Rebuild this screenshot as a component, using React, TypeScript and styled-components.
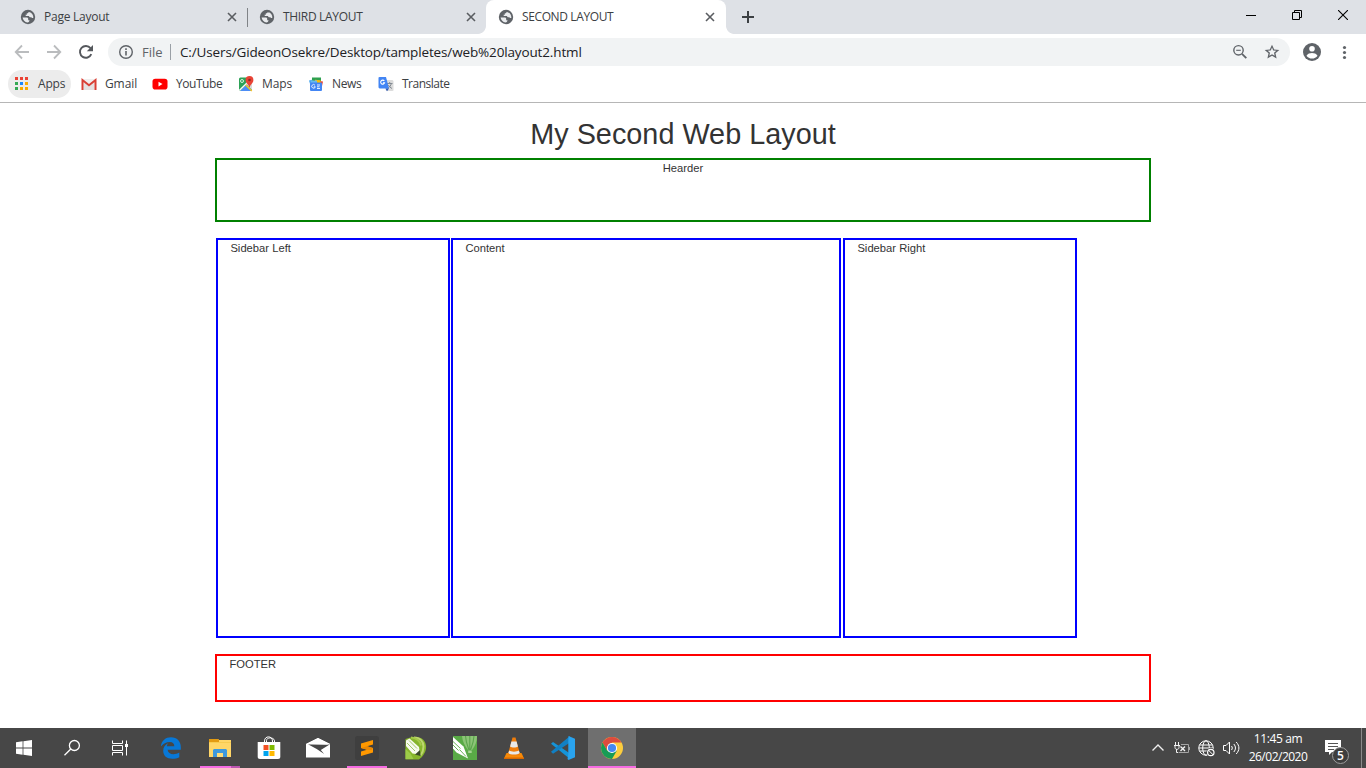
import React from 'react';
import styled, { createGlobalStyle } from 'styled-components';

const Global = createGlobalStyle`
  * { box-sizing: border-box; }
  html, body { margin: 0; padding: 0; background: #fff; overflow: hidden; }
  svg { display: block; flex: none; }
`;

const ui = `"Open Sans", "Noto Sans", sans-serif`;

const Screen = styled.div`
  width: 1366px;
  height: 768px;
  display: flex;
  flex-direction: column;
  font-family: ${ui};
`;

const Text = styled.span<{ $size?: number; $ls?: number; $color?: string }>`
  font-size: ${p => p.$size ?? 12}px;
  letter-spacing: ${p => p.$ls ?? 0}px;
  color: ${p => p.$color ?? '#3c4043'};
  white-space: nowrap;
  line-height: 16px;
`;

/* ---------- Tab strip ---------- */
const TabStrip = styled.div`
  height: 34px;
  background: #dee1e6;
  display: flex;
  padding-left: 8px;
`;

const Tab = styled.div<{ $active?: boolean; $divider?: boolean }>`
  position: relative;
  width: ${p => (p.$active ? 240 : 239)}px;
  height: 34px;
  display: flex;
  align-items: center;
  padding: 0 ${p => (p.$active ? 11 : 10)}px 0 12px;
  background: ${p => (p.$active ? '#fff' : 'transparent')};
  border-radius: 8px 8px 0 0;
  ${p => p.$divider && `&::after {
    content: ''; position: absolute; right: -1px; top: 8px; width: 1px; height: 19px; background: #808387;
  }`}
  ${p => p.$active && `
    &::before, &::after { content: ''; position: absolute; bottom: 0; width: 8px; height: 8px; }
    &::before { left: -8px; background: radial-gradient(circle at 0 0, transparent 7.5px, #fff 8.2px); }
    &::after { right: -8px; background: radial-gradient(circle at 100% 0, transparent 7.5px, #fff 8.2px); }
  `}
`;

const TabTitle = styled(Text)`
  margin-left: 8px;
  flex: 1;
`;

const NewTab = styled.div`
  padding: 11px 0 0 16px;
`;

const WindowButtons = styled.div`
  margin-left: auto;
  display: flex;
  height: 29px;
  align-items: center;
`;

const WindowButton = styled.div`
  width: 46px;
  display: flex;
  justify-content: center;
`;

/* ---------- Toolbar ---------- */
const Toolbar = styled.div`
  height: 36px;
  display: flex;
  align-items: center;
  padding: 0 14px 0 14px;
`;

const NavIcons = styled.div`
  display: flex;
  gap: 16px;
  margin-right: 14px;
`;

const Omnibox = styled.div`
  width: 1182px;
  height: 28px;
  border-radius: 14px;
  background: #f1f3f4;
  display: flex;
  align-items: center;
  padding: 0 10px;
`;

const Scheme = styled(Text)`
  width: 28px;
  margin-left: 8px;
  padding-right: 7px;
`;

const Address = styled(Text)`
  border-left: 1px solid #9aa0a6;
  padding-left: 9px;
  flex: 1;
`;

const OmniActions = styled.div`
  display: flex;
  gap: 16px;
`;

const ToolbarEnd = styled.div`
  display: flex;
  align-items: center;
  margin-left: 12px;
  gap: 14px;
`;

const Bookmarks = styled.div`
  height: 33px;
  display: flex;
  padding: 0 8px;
  border-bottom: 1px solid #b6b6b6;
`;

const Bookmark = styled.div<{ $width: number; $filled?: boolean }>`
  width: ${p => p.$width}px;
  height: 28px;
  display: flex;
  align-items: center;
  gap: 8px;
  padding-left: ${p => (p.$filled ? 6 : 10)}px;
  border-radius: 14px;
  background: ${p => (p.$filled ? '#ececec' : 'transparent')};
`;

/* ---------- Document ---------- */
const Page = styled.main`
  flex: 1;
  width: 936px;
  margin: 0 auto;
  color: #333;
  font: 11.2px/16px "Liberation Sans", Arial, sans-serif;
`;

const Heading = styled.h1`
  margin: 0;
  padding-top: 14.5px;
  height: 55px;
  text-align: center;
  font-weight: 400;
  font-size: 28.8px;
  line-height: 32px;
  letter-spacing: 0.02px;
`;

const Box = styled.div<{ $color: string; $height: number; $width?: number; $center?: boolean }>`
  border: 2px solid ${p => p.$color};
  width: ${p => (p.$width ? `${p.$width}px` : '100%')};
  height: ${p => p.$height}px;
  padding: 0 12.4px;
  text-align: ${p => (p.$center ? 'center' : 'left')};
  letter-spacing: 0.02px;
`;

const Columns = styled.div`
  display: flex;
  margin: 16px 0 16px 1px;
  gap: 1px;
  & > :last-child { margin-left: 1px; }
`;

/* ---------- Taskbar ---------- */
const Taskbar = styled.div`
  height: 40px;
  background: #474747;
  display: flex;
`;

const TaskItem = styled.div<{ $active?: boolean; $system?: boolean }>`
  position: relative;
  width: 48px;
  height: 40px;
  margin-right: ${p => (p.$system ? 0 : 1)}px;
  background: ${p => (p.$active ? '#6f6f6f' : 'transparent')};
  display: flex;
  align-items: center;
  justify-content: center;
`;

const SystemItems = styled.div`
  display: flex;
  margin-right: 3px;
`;

const Underline = styled.i<{ $width: number; $stacked?: boolean }>`
  position: absolute;
  bottom: 0;
  left: ${p => (48 - p.$width) / 2}px;
  width: ${p => p.$width}px;
  height: 2px;
  background: ${p => (p.$stacked ? 'linear-gradient(90deg, #f56be2 31px, #bb55af 31px)' : '#f56be2')};
`;

const Tray = styled.div`
  margin-left: auto;
  display: flex;
  align-items: center;
`;

const TrayIcons = styled.div`
  display: flex;
  gap: 8px;
  align-items: center;
`;

const Clock = styled.div`
  width: 76px;
  display: flex;
  flex-direction: column;
  align-items: center;
  gap: 2px;
  padding-bottom: 1px;
`;

const Notifications = styled.div`
  width: 45px;
  height: 40px;
  position: relative;
  padding: 12px 0 0 9px;
`;

const Badge = styled.span`
  position: absolute;
  left: 16px;
  top: 19px;
  width: 17px;
  height: 17px;
  border: 1px solid #9d9d9d;
  border-radius: 50%;
  background: #3e3e3e;
  color: #fff;
  font-size: 12px;
  font-weight: 600;
  line-height: 15px;
  text-align: center;
`;

const ShowDesktop = styled.div`
  width: 5px;
  height: 40px;
  border-left: 1px solid #8a8a8a;
`;

/* ---------- Icons ---------- */
const Globe = () => (
  <svg width="16" height="16" viewBox="0 0 16 16">
    <circle cx="8" cy="8" r="7.200" fill="#5f6368" />
    <path d="M2.600 8.600h3.900c1.300 0 1.700.6 1.700 1.400v1.200h1.300c0 1.200-.8 2.200-2 2.300C4.900 13.200 2.900 11.200 2.600 8.600zM9 2.900c-.7.3-1 .7-1 1.400H6.800v1.500H5.500c0 .8.400 1.200 1.200 1.200h2.200c.3.9.8 1.200 1.700 1.200h.8c.4.700.8.9 1.900.8.300-2.800-1.300-5.400-4.300-6.100z" fill="#e9ebee" />
  </svg>
);

const CloseMark = () => (
  <svg width="10" height="10" viewBox="0 0 10 10" stroke="#5a5d61" strokeWidth="1.6">
    <path d="M1 1l8 8M9 1L1 9" />
  </svg>
);

const BackArrow = ({ flip }: { flip?: boolean }) => (
  <svg width="16" height="16" viewBox="0 0 16 16" fill="none" stroke="#babcbe" strokeWidth="1.8">
    <path d={flip ? 'M1 8h13M8 1.500L14.300 8 8 14.500' : 'M15 8H2M8 1.500L1.700 8 8 14.500'} />
  </svg>
);

const Reload = () => (
  <svg width="16" height="16" viewBox="0 0 16 16">
    <path d="M13.300 10.200A5.900 5.900 0 1 1 12.500 4.200" fill="none" stroke="#55585d" strokeWidth="1.900" />
    <path d="M15 1v6.200H8.800z" fill="#55585d" />
  </svg>
);

const Info = () => (
  <svg width="16" height="16" viewBox="0 0 16 16">
    <circle cx="8" cy="8" r="6.300" fill="none" stroke="#5f6368" strokeWidth="1.400" />
    <path d="M7.200 7h1.600v4.600H7.200zM7.200 4.300h1.600v1.600H7.200z" fill="#5f6368" />
  </svg>
);

const ZoomOut = () => (
  <svg width="16" height="16" viewBox="0 0 16 16" fill="none" stroke="#5f6368">
    <circle cx="6.500" cy="6.300" r="4.700" strokeWidth="1.400" />
    <path d="M4.200 6.300h4.600" strokeWidth="1.100" />
    <path d="M10 9.900l4.300 4.300" strokeWidth="1.800" />
  </svg>
);

const Star = () => (
  <svg width="16" height="16" viewBox="0 0 24 24" fill="#5f6368">
    <path d="M23 8.900l-7.700-.7L12 1 8.700 8.200 1 8.900l5.800 5.100L5.100 21.700 12 17.600l6.900 4.100-1.700-7.700zM12 15.300l-4 2.400 1-4.600-3.500-3.100 4.700-.4L12 5.300l1.800 4.300 4.700.4-3.500 3.100 1 4.600z" />
  </svg>
);

const Person = () => (
  <svg width="20" height="20" viewBox="0 0 20 20">
    <circle cx="10" cy="10" r="9" fill="#5f6368" />
    <circle cx="10" cy="6.700" r="2.800" fill="#fff" />
    <path d="M4.500 13.700c1-2 3.500-2.700 5.500-2.700s4.500.7 5.500 2.700c-1.200 1.800-3.300 2.900-5.500 2.900s-4.300-1.100-5.500-2.900z" fill="#fff" />
  </svg>
);

const Dots = () => (
  <svg width="16" height="16" viewBox="0 0 16 16" fill="#5f6368">
    <circle cx="8.500" cy="3.500" r="1.600" /><circle cx="8.500" cy="8.500" r="1.600" /><circle cx="8.500" cy="13.500" r="1.600" />
  </svg>
);

const gridColors = ['#ea4335', '#ea4335', '#ea4335', '#34a853', '#1a88ff', '#fbab05', '#34a853', '#f9ab00', '#f9ab00'];
const AppsIcon = () => (
  <svg width="16" height="16" viewBox="0 0 16 16">
    {gridColors.map((c, i) => (
      <rect key={i} x={1 + (i % 3) * 5} y={1 + Math.floor(i / 3) * 5} width="3" height="3" fill={c} />
    ))}
  </svg>
);

const GmailIcon = () => (
  <svg width="16" height="16" viewBox="0 0 16 16">
    <path d="M1 3h14v11H1z" fill="#f1eeee" />
    <path d="M3 14V5l5 4 5-4v9z" fill="#e4e1e1" />
    <path d="M1.500 14V4L8 9.200 14.500 4v10" fill="none" stroke="#d93f35" strokeWidth="2" />
  </svg>
);

const YouTubeIcon = () => (
  <svg width="16" height="16" viewBox="0 0 16 16">
    <rect x=".5" y="2.700" width="15" height="10.800" rx="2.800" fill="#f00" />
    <path d="M6.500 5.700v4.700l4-2.350z" fill="#fff" />
  </svg>
);

const MapsIcon = () => (
  <svg width="16" height="16" viewBox="0 0 16 16">
    <rect x="1" y="1.500" width="13" height="13.500" rx="1.500" fill="#2da257" />
    <path d="M8 8l6-4v10l-3-3z" fill="#dadada" />
    <path d="M2 15l5.500-5.500L13 15z" fill="#4c8df6" />
    <path d="M1.300 14.500L10 6" stroke="#f6f6f6" strokeWidth="1.500" />
    <path d="M7.800 9l6 6" stroke="#fbc230" strokeWidth="1.300" />
    <circle cx="4" cy="5" r="1.500" fill="none" stroke="#d8eedf" />
    <path d="M11.100 11C10.800 8 7.600 7.300 7.600 3.900a3.900 3.900 0 0 1 7.800 0c0 3.400-3.200 4.100-3.500 7.100z" fill="#e94335" />
    <circle cx="11.500" cy="4" r="1.300" fill="#8e2b20" />
  </svg>
);

const NewsIcon = () => (
  <svg width="16" height="16" viewBox="0 0 16 16">
    <path d="M4 1.500h9V7H4z" fill="#2da04f" />
    <path d="M1 4.500l3-.8 2 4H2z" fill="#48a6ee" /><path d="M11.500 5l3.500.5-1 4.500h-3z" fill="#e94335" />
    <path d="M7 3.800l5.500.5V8H7z" fill="#fbbc04" />
    <path d="M3 4.500h6V8H3z" fill="#69b9ee" />
    <rect x="2" y="6.500" width="12" height="8.500" rx="1" fill="#4285f4" />
    <path d="M7 9.300a1.800 1.800 0 1 0 .3 1.500H5.800M9 9h3M9 10.800h2.500M9 12.500h3" fill="none" stroke="#e7f0ff" />
  </svg>
);

const TranslateIcon = () => (
  <svg width="16" height="16" viewBox="0 0 16 16">
    <path d="M6 4h8.500l1 1v9.500l-1 .5H8z" fill="#dcdcdc" />
    <path d="M9 7.500h5.500M11.700 6v1.500M13.300 7.500c-.3 2-2 4-3.500 4.700M10.300 9c.8 1.500 2 2.700 3.700 3.500" stroke="#848b93" fill="none" />
    <path d="M1.500 1H8l3 11.500H1.500L.5 11.500V1.500z" fill="#4285f4" /><path d="M7.500 12.500H11l-2 2.700z" fill="#2856b8" />
    <path d="M6.300 5a2 2 0 1 0 .3 1.700H5" fill="none" stroke="#fff" strokeWidth="1.100" />
  </svg>
);

const StartIcon = () => (
  <svg width="16" height="16" viewBox="0 0 16 16" fill="#fff">
    <path d="M0 2.300L6.600 1.300v6.300H0zM7.400 1.200L16 0v7.600H7.400zM0 8.400h6.600v6.300L0 13.700zM7.400 8.400H16V16l-8.600-1.200z" />
  </svg>
);

const SearchIcon = () => (
  <svg width="18" height="18" viewBox="0 0 18 18" fill="none" stroke="#fff" strokeWidth="1.300">
    <circle cx="11.400" cy="6.500" r="5" /><path d="M7.800 10L1.500 16.300" />
  </svg>
);

const TaskViewIcon = () => (
  <svg width="18" height="16" viewBox="0 0 18 16" fill="none" stroke="#fff" strokeWidth="1">
    <path d="M1.500 0.500v3h10v-3M1.500 15.500v-3h10v3M1.500 5.500h10v5h-10zM15.500 .5v15" />
    <path d="M14 4h3v3h-3z" fill="#fff" stroke="none" />
  </svg>
);

const EdgeIcon = () => (
  <svg width="22" height="24" viewBox="0 0 22 24">
    <path d="M.8 10.500C1.500 4.500 5.700 1.200 11 1.200c6 0 9.800 4.200 9.800 9.800v2.800H7.600c.3 3 2.700 4.400 5.700 4.400 2.300 0 4.300-.6 6-1.600v4.600c-2 1-4.300 1.500-7 1.500-5.600 0-9.100-3-9.100-8 0-3.400 1.900-5.900 5-7.400-.7.8-1.200 1.800-1.400 2.900h7.500c0-2.700-1.500-4.300-4.400-4.300-3.700 0-7 1.800-9.100 4.600z" fill="#0878d7" />
  </svg>
);

const FolderIcon = () => (
  <svg width="22" height="20" viewBox="0 0 22 20">
    <path d="M0 1h9l1 1h12v17H0z" fill="#ffd667" />
    <path d="M0 1h9l1 1v2H0z" fill="#e39b12" />
    <path d="M0 4h22v1H0z" fill="#f7cb50" />
    <path d="M4 19v-7l1-1h12l1 1v7h-4v-4H8v4z" fill="#3d98dc" />
    <path d="M8 19v-4h6v4z" fill="#ffdc78" />
  </svg>
);

const StoreIcon = () => (
  <svg width="24" height="24" viewBox="0 0 24 24">
    <path d="M7.500 7V5c0-5.500 8-5.500 8 0v2M9.500 7V4.500c0-3.500 8-3.500 8 .5v2" fill="none" stroke="#fff" strokeWidth="1" />
    <path d="M.7 6h22.600v14.500c0 1.800-.8 2.500-2.300 2.500H3C1.500 23 .7 22.300.7 20.500z" fill="#fff" />
    <path d="M6.500 9h5v5h-5z" fill="#f25022" /><path d="M12.500 9h5v5h-5z" fill="#7fba00" />
    <path d="M6.500 15h5v5h-5z" fill="#00a4ef" /><path d="M12.500 15h5v5h-5z" fill="#ffb900" />
  </svg>
);

const MailIcon = () => (
  <svg width="24" height="20" viewBox="0 0 24 20">
    <path d="M12 0l12 6v13.500H0V6z" fill="#fff" />
    <path d="M2 6.300H24L14.800 12l3.400 4-7.500-5z" fill="#474747" />
    <path d="M12 0l12 6-3 .8L2 6.300 0 6z" fill="#fff" />
  </svg>
);

const SublimeIcon = () => (
  <svg width="24" height="24" viewBox="0 0 24 24">
    <rect width="24" height="24" rx="2.500" fill="#3f3f3f" />
    <path d="M6 7.500L18 4v4.500l-6 1.800 6 1.600v4.600L6 20v-4.600l6-1.700-6-1.600z" fill="#ff9800" />
    <path d="M9.500 11l2.500-.7 6 1.600-1.500 2-4.500-.2-6-1.600z" fill="#ea8704" />
  </svg>
);

const CorelBalloonIcon = () => (
  <svg width="22" height="24" viewBox="0 0 22 24">
    <path d="M.5 3C7 .5 14 0 18 3.500c4 4 4 10 1 14.500-1.500 2.500-3 4-5 5.500H.5z" fill="#86b52c" />
    <path d="M9 1.500c6 0 9.500 4 9.500 9s-1.500 7-3 9" fill="none" stroke="#bdd66f" strokeWidth="2" />
    <path d="M6 1.500c5 0 9 3.500 10 8" fill="none" stroke="#a5ca4a" strokeWidth="2" />
    <path d="M1 4.500l3.500-2 9.500 8.500 1 7.500-7.500-1L1 10z" fill="#f7faee" />
    <path d="M2 7l8 8M4 4.500l8 8" stroke="#8cb945" strokeWidth=".8" />
    <path d="M10 18.500l5-4.500.5 6z" fill="#3a4b28" />
    <path d="M.5 13l5 4.500 3 5.500h-8z" fill="#9ccc48" />
  </svg>
);

const CorelDrawIcon = () => (
  <svg width="24" height="24" viewBox="0 0 24 24">
    <path d="M0 0h24v24H0z" fill="#59aa46" />
    <path d="M9 0h15c0 6-2 10-5 14h-4C12 10 9.500 6 9 0z" fill="#8cc477" />
    <path d="M12.500 0c.3 6 2 10 3.500 14M21 0c-.3 6-2 10-3.500 14M16.800 0v14" fill="none" stroke="#5ba54c" strokeWidth="1.100" />
    <path d="M15.200 14.500h3.500v2.500h-3.500z" fill="#a7d294" />
    <path d="M0 1l10.500 9.500L15 22.500 3.500 16.500 0 12.500z" fill="#fff" />
    <path d="M0 5.500l7.500 7M0 9l5.500 5.500M6.500 13.500l6.500 7" stroke="#59aa46" strokeWidth=".9" />
  </svg>
);

const VlcIcon = () => (
  <svg width="20" height="24" viewBox="0 0 20 24">
    <path d="M2.500 17h15l2.500 5.500H0z" fill="#f78a08" /><path d="M0 21.500h20V23H0z" fill="#d96800" />
    <path d="M8.500 1.500h3L16 18c-2 2-10 2-12 0z" fill="#ef7d0b" />
    <path d="M7.400 5.500h5.200l1.300 5c-2 1.300-5.800 1.300-7.800 0zM5.200 14.500c2 1.500 7.600 1.500 9.600 0L15.700 17c-2 2-9.400 2-11.400 0z" fill="#e8e8e8" />
  </svg>
);

const CodeIcon = () => (
  <svg width="24" height="24" viewBox="0 0 24 24">
    <path d="M0 7.800l2-1.900L19 17.500V23z" fill="#1594d8" />
    <path d="M0 15.800l2 2L19 6.500V0z" fill="#1180c4" />
    <path d="M17.500 0L24 2.800v18.400L17.500 24l-1-1 .8-4.500v-13z" fill="#29a3ee" />
  </svg>
);

const ChromeIcon = () => (
  <svg width="22" height="22" viewBox="0 0 22 22">
    <circle cx="11" cy="11" r="11" fill="#fccd3e" />
    <path d="M1.500 5.500A11 11 0 0 1 20.500 5.500H11L6.300 13.800z" fill="#dd4b3e" />
    <path d="M1.500 5.500A11 11 0 0 0 11 22l4.800-8.300H6.300z" fill="#179c56" />
    <circle cx="11" cy="11" r="5.100" fill="#fff" /><circle cx="11" cy="11" r="4.100" fill="#4688f2" />
  </svg>
);

const ChevronUp = () => (
  <svg width="14" height="16" viewBox="0 0 14 16" fill="none" stroke="#eee" strokeWidth="1.400">
    <path d="M1.500 10.500L7 5l5.500 5.500" />
  </svg>
);

const PowerIcon = () => (
  <svg width="17" height="16" viewBox="0 0 17 16" fill="none" stroke="#f3f3f3">
    <path d="M2.500 2v3M5.500 2v3M1 5.500h6M2 6v1.500c0 2.500 4 2.500 4 0V6M3.500 9v3.500H5" />
    <path d="M8 4.500h7.500v8H5.500" stroke="#a5a5a5" /><path d="M16.500 7v3" stroke="#a5a5a5" />
    <path d="M7.500 6.500l4.500 4.500M12 6.500L7.500 11" strokeWidth="1.400" />
  </svg>
);

const NetworkIcon = () => (
  <svg width="17" height="17" viewBox="0 0 17 17" fill="none" stroke="#fff">
    <circle cx="8" cy="8" r="7.200" /><ellipse cx="8" cy="8" rx="3.300" ry="7.200" />
    <path d="M1.500 5h13M.8 8h14.400M1.500 11h13" />
    <circle cx="12.800" cy="12.500" r="4.500" fill="#474747" stroke="none" />
    <circle cx="12.800" cy="12.500" r="3.200" strokeWidth="1.200" /><path d="M10.600 10.300l4.400 4.400" />
  </svg>
);

const VolumeIcon = () => (
  <svg width="17" height="16" viewBox="0 0 17 16" fill="none" stroke="#fff">
    <path d="M.5 5.500H3l3.500-3.500v12L3 10.500H.5zM8.500 6c1 1.300 1 2.700 0 4" />
    <path d="M10.800 4c2.200 2.700 2.200 5.300 0 8M13.200 2c3.600 4 3.600 8 0 12" />
  </svg>
);

const MessageIcon = () => (
  <svg width="17" height="17" viewBox="0 0 17 17">
    <path d="M0 0h16v12H7l-3 3v-3H0z" fill="#fff" />
    <path d="M3 3.500h10M3 6.500h10M3 9.500h6" stroke="#555" />
  </svg>
);

const tabs = [
  { title: 'Page Layout', ls: -0.25, divider: true },
  { title: 'THIRD LAYOUT', ls: -0.32 },
  { title: 'SECOND LAYOUT', ls: -0.38, active: true },
];

const bookmarks = [
  { label: 'Apps', icon: <AppsIcon />, width: 63, filled: true, ls: -0.2 },
  { label: 'Gmail', icon: <GmailIcon />, width: 71, ls: -0.1 },
  { label: 'YouTube', icon: <YouTubeIcon />, width: 86, ls: -0.45 },
  { label: 'Maps', icon: <MapsIcon />, width: 70, ls: -0.1 },
  { label: 'News', icon: <NewsIcon />, width: 70, ls: -0.35 },
  { label: 'Translate', icon: <TranslateIcon />, width: 90, ls: -0.5 },
];

const apps = [
  { icon: <EdgeIcon /> },
  { icon: <FolderIcon />, underline: 40, stacked: true },
  { icon: <StoreIcon /> },
  { icon: <MailIcon /> },
  { icon: <SublimeIcon />, underline: 40 },
  { icon: <CorelBalloonIcon /> },
  { icon: <CorelDrawIcon /> },
  { icon: <VlcIcon /> },
  { icon: <CodeIcon /> },
  { icon: <ChromeIcon />, underline: 48, active: true },
];

export default function App() {
  return (
    <Screen>
      <Global />
      <TabStrip>
        {tabs.map(t => (
          <Tab key={t.title} $active={t.active} $divider={t.divider}>
            <Globe />
            <TabTitle $ls={t.ls}>{t.title}</TabTitle>
            <CloseMark />
          </Tab>
        ))}
        <NewTab>
          <svg width="12" height="12" viewBox="0 0 12 12" stroke="#3c4043" strokeWidth="2"><path d="M6 0v12M0 6h12" /></svg>
        </NewTab>
        <WindowButtons>
          <WindowButton>
            <svg width="10" height="10" viewBox="0 0 10 10"><path d="M0 5h10v1H0z" /></svg>
          </WindowButton>
          <WindowButton>
            <svg width="10" height="10" viewBox="0 0 10 10" fill="none" stroke="#000"><path d="M.5 2.500h7v7h-7zM2.500 2.500v-2h7v7h-2" /></svg>
          </WindowButton>
          <WindowButton>
            <svg width="10" height="10" viewBox="0 0 10 10" stroke="#000" strokeWidth="1.100"><path d="M0 0l10 10M10 0L0 10" /></svg>
          </WindowButton>
        </WindowButtons>
      </TabStrip>

      <Toolbar>
        <NavIcons><BackArrow /><BackArrow flip /><Reload /></NavIcons>
        <Omnibox>
          <Info />
          <Scheme $size={13} $color="#5f6368">File</Scheme>
          <Address $size={13.5} $ls={-0.14} $color="#202124">C:/Users/GideonOsekre/Desktop/tampletes/web%20layout2.html</Address>
          <OmniActions><ZoomOut /><Star /></OmniActions>
        </Omnibox>
        <ToolbarEnd><Person /><Dots /></ToolbarEnd>
      </Toolbar>

      <Bookmarks>
        {bookmarks.map(b => (
          <Bookmark key={b.label} $width={b.width} $filled={b.filled}>
            {b.icon}
            <Text $ls={b.ls}>{b.label}</Text>
          </Bookmark>
        ))}
      </Bookmarks>

      <Page>
        <Heading>My Second Web Layout</Heading>
        <Box $color="green" $height={64} $center>Hearder</Box>
        <Columns>
          <Box $color="blue" $height={400} $width={234}>Sidebar Left</Box>
          <Box $color="blue" $height={400} $width={390}>Content</Box>
          <Box $color="blue" $height={400} $width={234}>Sidebar Right</Box>
        </Columns>
        <Box $color="red" $height={48}>FOOTER</Box>
      </Page>

      <Taskbar>
        <SystemItems>
          <TaskItem $system><StartIcon /></TaskItem>
          <TaskItem $system><SearchIcon /></TaskItem>
          <TaskItem $system><TaskViewIcon /></TaskItem>
        </SystemItems>
        {apps.map((a, i) => (
          <TaskItem key={i} $active={a.active}>
            {a.icon}
            {a.underline && <Underline $width={a.underline} $stacked={a.stacked} />}
          </TaskItem>
        ))}
        <Tray>
          <TrayIcons><ChevronUp /><PowerIcon /><NetworkIcon /><VolumeIcon /></TrayIcons>
          <Clock>
            <Text $color="#fff" $ls={-0.35}>11:45 am</Text>
            <Text $color="#fff" $ls={-0.5}>26/02/2020</Text>
          </Clock>
          <Notifications><MessageIcon /><Badge>5</Badge></Notifications>
          <ShowDesktop />
        </Tray>
      </Taskbar>
    </Screen>
  );
}
